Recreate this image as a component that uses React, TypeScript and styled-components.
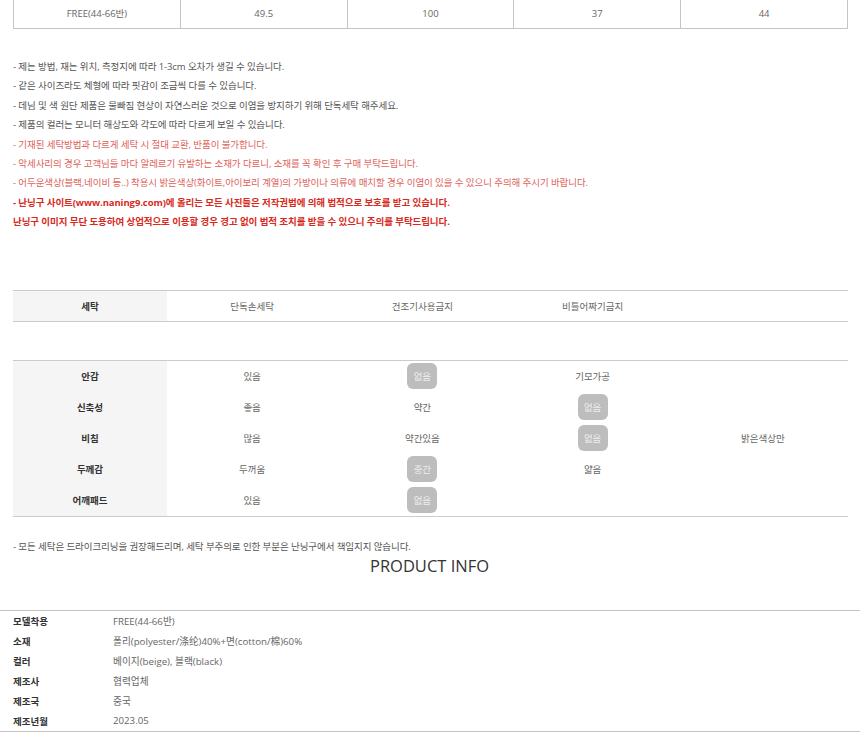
import styled, { createGlobalStyle } from 'styled-components'

const GlobalStyle = createGlobalStyle`
    body {
        margin: 0;
        background: #fff;
        font-family: "Open Sans", "Noto Sans CJK KR", sans-serif;
    }
`

const sizeRow = ['FREE(44-66반)', '49.5', '100', '37', '44']

const notes: { text: string, tone: 'gray' | 'red' | 'strong' }[] = [
    { text: '- 제는 방법, 재는 위치, 측정지에 따라 1-3cm 오차가 생길 수 있습니다.', tone: 'gray' },
    { text: '- 같은 사이즈라도 체형에 따라 핏감이 조금씩 다를 수 있습니다.', tone: 'gray' },
    { text: '- 데님 및 색 원단 제품은 물빠짐 현상이 자연스러운 것으로 이염을 방지하기 위해 단독세탁 해주세요.', tone: 'gray' },
    { text: '- 제품의 컬러는 모니터 해상도와 각도에 따라 다르게 보일 수 있습니다.', tone: 'gray' },
    { text: '- 기재된 세탁방법과 다르게 세탁 시 절대 교환, 반품이 불가합니다.', tone: 'red' },
    { text: '- 악세사리의 경우 고객님들 마다 알레르기 유발하는 소재가 다르니, 소재를 꼭 확인 후 구매 부탁드립니다.', tone: 'red' },
    { text: '- 어두운색상(블랙,네이비 등..) 착용시 밝은색상(화이트,아이보리 계열)의 가방이나 의류에 매치할 경우 이염이 있을 수 있으니 주의해 주시기 바랍니다.', tone: 'red' },
    { text: '- 난닝구 사이트(www.naning9.com)에 올리는 모든 사진들은 저작권법에 의해 법적으로 보호를 받고 있습니다.', tone: 'strong' },
    { text: '난닝구 이미지 무단 도용하여 상업적으로 이용할 경우 경고 없이 법적 조치를 받을 수 있으니 주의를 부탁드립니다.', tone: 'strong' },
]

type Cell = { text: string, badge?: boolean }

const feelRows: { label: string, cells: Cell[] }[] = [
    { label: '안감', cells: [{ text: '있음' }, { text: '없음', badge: true }, { text: '기모가공' }, { text: '' }] },
    { label: '신축성', cells: [{ text: '좋음' }, { text: '약간' }, { text: '없음', badge: true }, { text: '' }] },
    { label: '비침', cells: [{ text: '많음' }, { text: '약간있음' }, { text: '없음', badge: true }, { text: '밝은색상만' }] },
    { label: '두께감', cells: [{ text: '두꺼움' }, { text: '중간', badge: true }, { text: '얇음' }, { text: '' }] },
    { label: '어깨패드', cells: [{ text: '있음' }, { text: '없음', badge: true }, { text: '' }, { text: '' }] },
]

const info = [
    ['모델착용', 'FREE(44-66반)'],
    ['소재', '폴리(polyester/涤纶)40%+면(cotton/棉)60%'],
    ['컬러', '베이지(beige), 블랙(black)'],
    ['제조사', '협력업체'],
    ['제조국', '중국'],
    ['제조년월', '2023.05'],
]

export default function App() {
    return (
        <Page>
            <GlobalStyle />
            <Inner>
                <SizeTable>
                    {sizeRow.map((v, i) => (
                        <SizeCell key={i}>{v}</SizeCell>
                    ))}
                </SizeTable>

                <Notes>
                    {notes.map((n, i) => (
                        <Note key={i} $tone={n.tone}>{n.text}</Note>
                    ))}
                </Notes>

                <WashTable>
                    <HeadCell>세탁</HeadCell>
                    <ValueCell>단독손세탁</ValueCell>
                    <ValueCell>건조기사용금지</ValueCell>
                    <ValueCell>비틀어짜기금지</ValueCell>
                    <ValueCell />
                </WashTable>

                <FeelTable>
                    {feelRows.map(row => (
                        <FeelRow key={row.label}>
                            <HeadCell>{row.label}</HeadCell>
                            {row.cells.map((c, i) => (
                                <ValueCell key={i}>
                                    {c.badge ? <Badge>{c.text}</Badge> : c.text}
                                </ValueCell>
                            ))}
                        </FeelRow>
                    ))}
                </FeelTable>

                <Footnote>- 모든 세탁은 드라이크리닝을 권장해드리며, 세탁 부주의로 인한 부분은 난닝구에서 책임지지 않습니다.</Footnote>
                <SectionTitle>PRODUCT INFO</SectionTitle>
            </Inner>

            <InfoTable>
                {info.map(([k, v]) => (
                    <InfoRow key={k}>
                        <InfoLabel>{k}</InfoLabel>
                        <InfoValue>{v}</InfoValue>
                    </InfoRow>
                ))}
            </InfoTable>
        </Page>
    )
}

const Page = styled.div`
    width: 860px;
    min-height: 744px;
    background: #fff;
    color: #555;
    font-size: 10px;
`

const Inner = styled.div`
    padding: 0 12px 0 13px;
    display: flex;
    flex-direction: column;
`

const SizeTable = styled.div`
    display: grid;
    grid-template-columns: repeat(5, 1fr);
    border-bottom: 1px solid #c4c4c4;
    border-left: 1px solid #c4c4c4;
`

const SizeCell = styled.div`
    height: 28px;
    line-height: 28px;
    text-align: center;
    border-right: 1px solid #c4c4c4;
    color: #666;
    font-size: 9.5px;
`

const Notes = styled.div`
    margin-top: 28px;
    display: flex;
    flex-direction: column;
`

const toneColor = {
    gray: '#555',
    red: '#e0625a',
    strong: '#d82a1c',
}

const Note = styled.div<{ $tone: 'gray' | 'red' | 'strong' }>`
    line-height: 19.4px;
    font-size: 9.5px;
    letter-spacing: -0.08px;
    white-space: nowrap;
    color: ${({ $tone }) => toneColor[$tone]};
    font-weight: ${({ $tone }) => ($tone === 'strong' ? 700 : 400)};
`

const WashTable = styled.div`
    margin-top: 58px;
    display: grid;
    grid-template-columns: 154px repeat(4, 1fr);
    border-top: 1px solid #ccc;
    border-bottom: 1px solid #ccc;
    height: 30px;
`

const HeadCell = styled.div`
    background: #f5f5f5;
    display: flex;
    align-items: center;
    justify-content: center;
    font-weight: 700;
    color: #333;
    font-size: 9.5px;
`

const ValueCell = styled.div`
    display: flex;
    align-items: center;
    justify-content: center;
    color: #666;
    font-size: 9.5px;
`

const FeelTable = styled.div`
    margin-top: 38px;
    border-top: 1px solid #ccc;
    border-bottom: 1px solid #ccc;
    display: flex;
    flex-direction: column;
`

const FeelRow = styled.div`
    display: grid;
    grid-template-columns: 154px repeat(4, 1fr);
    height: 31px;
`

const Badge = styled.span`
    display: inline-flex;
    align-items: center;
    justify-content: center;
    width: 30px;
    height: 26px;
    border-radius: 6px;
    background: #bdbdbd;
    color: #eee;
    font-size: 9.5px;
`

const Footnote = styled.div`
    margin-top: 21px;
    line-height: 18px;
    font-size: 9.5px;
    letter-spacing: -0.08px;
    color: #555;
`

const SectionTitle = styled.div`
    text-align: center;
    font-family: "Open Sans", sans-serif;
    font-size: 16.5px;
    color: #333;
    line-height: 20px;
    margin-left: -2px;
`

const InfoTable = styled.div`
    margin-top: 34px;
    border-top: 1px solid #c4c4c4;
    border-bottom: 1px solid #c4c4c4;
    padding: 0 13px;
`

const InfoRow = styled.div`
    display: flex;
    height: 20px;
    align-items: center;
`

const InfoLabel = styled.div`
    width: 100px;
    font-weight: 700;
    color: #333;
    font-size: 9.5px;
`

const InfoValue = styled.div`
    color: #666;
    font-size: 9.7px;
`
